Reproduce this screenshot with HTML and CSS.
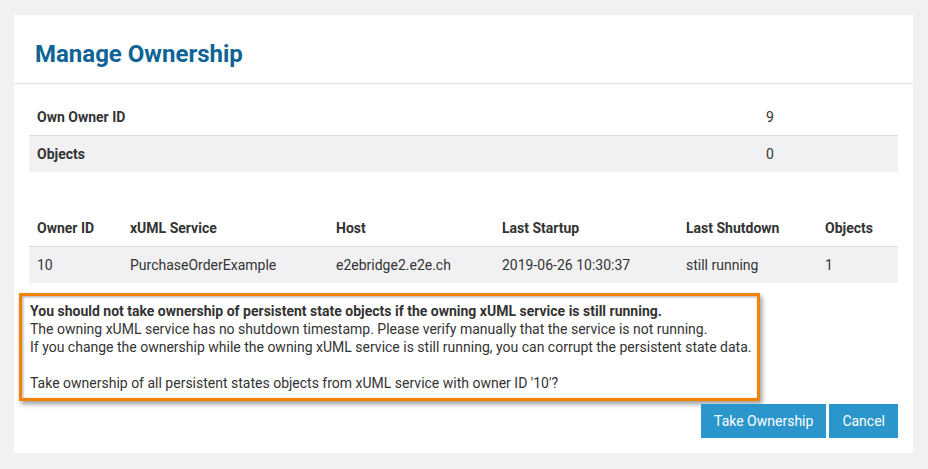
FILE: index.html
```html
<!DOCTYPE html>
<html>
<head>
<meta charset="utf-8">
<link rel="stylesheet" href="styles.css">
</head>
<body>
<div class="panel">
  <div class="panel-header">
    <h1 class="title">Manage Ownership</h1>
  </div>
  <div class="panel-body">
    <table class="tbl summary">
      <colgroup><col class="c-label"><col></colgroup>
      <tbody>
        <tr><th>Own Owner ID</th><td>9</td></tr>
        <tr class="striped"><th>Objects</th><td>0</td></tr>
      </tbody>
    </table>
    <table class="tbl owners">
      <colgroup>
        <col class="c1"><col class="c2"><col class="c3"><col class="c4"><col class="c5"><col>
      </colgroup>
      <thead>
        <tr><th>Owner ID</th><th>xUML Service</th><th>Host</th><th>Last Startup</th><th>Last Shutdown</th><th>Objects</th></tr>
      </thead>
      <tbody>
        <tr class="striped"><td>10</td><td>PurchaseOrderExample</td><td>e2ebridge2.e2e.ch</td><td>2019-06-26 10:30:37</td><td>still running</td><td>1</td></tr>
      </tbody>
    </table>
    <div class="warning">
      <p class="warn-strong">You should not take ownership of persistent state objects if the owning xUML service is still running.</p>
      <p>The owning xUML service has no shutdown timestamp. Please verify manually that the service is not running.</p>
      <p>If you change the ownership while the owning xUML service is still running, you can corrupt the persistent state data.</p>
      <p class="blank">&nbsp;</p>
      <p>Take ownership of all persistent states objects from xUML service with owner ID '10'?</p>
    </div>
    <div class="actions">
      <button class="btn">Take Ownership</button>
      <button class="btn">Cancel</button>
    </div>
  </div>
</div>
</body>
</html>
```
FILE: styles.css
```css
html, body {
  margin: 0;
  padding: 0;
}
body {
  background: #f1f1f3;
  font-family: Roboto, "Liberation Sans", sans-serif;
  font-size: 14px;
  color: #333;
  padding: 15px 15px 16px 14px;
}
.panel {
  width: 899px;
  background: #fff;
}
.panel-header {
  padding: 25px 21px 15px;
  border-bottom: 1px solid #e2e2e2;
}
.title {
  margin: 0;
  font-size: 24px;
  line-height: 28px;
  font-weight: 700;
  color: #0e6496;
}
.panel-body {
  padding: 15px 15px 15px 15px;
}
.tbl {
  width: 869px;
  border-collapse: collapse;
  table-layout: fixed;
}
.tbl th, .tbl td {
  text-align: left;
  padding: 8px 8px;
  line-height: 20px;
  white-space: nowrap;
}
.tbl th {
  font-weight: 700;
}
.tbl td {
  font-weight: 400;
}
.striped {
  background: #f1f1f3;
}
.summary tr:first-child {
  border-bottom: 1px solid #dedede;
}
.summary .c-label { width: 729px; }
.owners {
  margin-top: 38px;
}
.owners thead tr {
  border-bottom: 1px solid #dedede;
}
.owners .c1 { width: 93px; }
.owners .c2 { width: 206px; }
.owners .c3 { width: 166px; }
.owners .c4 { width: 184px; }
.owners .c5 { width: 139px; }
.warning {
  margin: 10px 0 0 -10px;
  width: 719px;
  padding: 6px 8px 6px 8px;
  border: 3px solid #f28300;
  box-shadow: 2px 3px 5px rgba(0, 0, 0, 0.4), inset 1px 1px 3px rgba(0, 0, 0, 0.35);
  background: #fff;
}
.warning p {
  margin: 0;
  line-height: 18px;
  white-space: nowrap;
}
.warn-strong {
  font-weight: 700;
}
.actions {
  display: flex;
  justify-content: flex-end;
  gap: 3px;
  margin-top: 3px;
}
.btn {
  font-family: Roboto, "Liberation Sans", sans-serif;
  font-size: 14px;
  color: #fff;
  background: #2b96cb;
  border: none;
  border-radius: 0;
  height: 34px;
  padding: 0 13px;
  line-height: 34px;
}
```
